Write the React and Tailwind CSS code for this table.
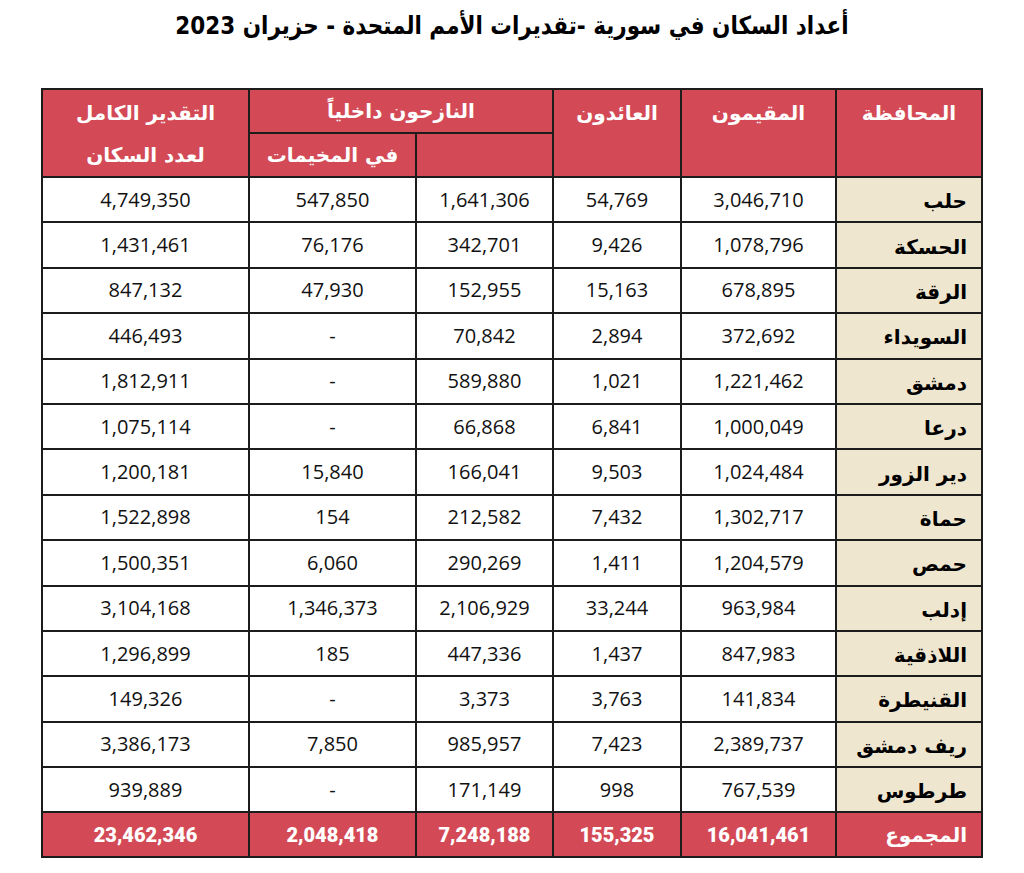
// Syria population table — UN estimates, June 2023

const ROWS = [
  ['حلب', '3,046,710', '54,769', '1,641,306', '547,850', '4,749,350'],
  ['الحسكة', '1,078,796', '9,426', '342,701', '76,176', '1,431,461'],
  ['الرقة', '678,895', '15,163', '152,955', '47,930', '847,132'],
  ['السويداء', '372,692', '2,894', '70,842', '-', '446,493'],
  ['دمشق', '1,221,462', '1,021', '589,880', '-', '1,812,911'],
  ['درعا', '1,000,049', '6,841', '66,868', '-', '1,075,114'],
  ['دير الزور', '1,024,484', '9,503', '166,041', '15,840', '1,200,181'],
  ['حماة', '1,302,717', '7,432', '212,582', '154', '1,522,898'],
  ['حمص', '1,204,579', '1,411', '290,269', '6,060', '1,500,351'],
  ['إدلب', '963,984', '33,244', '2,106,929', '1,346,373', '3,104,168'],
  ['اللاذقية', '847,983', '1,437', '447,336', '185', '1,296,899'],
  ['القنيطرة', '141,834', '3,763', '3,373', '-', '149,326'],
  ['ريف دمشق', '2,389,737', '7,423', '985,957', '7,850', '3,386,173'],
  ['طرطوس', '767,539', '998', '171,149', '-', '939,889'],
];

const TOTAL = ['المجموع', '16,041,461', '155,325', '7,248,188', '2,048,418', '23,462,346'];

const AR = "font-['DejaVu_Sans',sans-serif]";
const NUM = "font-['Open_Sans',sans-serif]";
const CELL = 'border-2 border-[#1c1c1c]';

export default function App() {
  return (
    <div className="min-h-screen bg-white pt-[9px]">
      <h1 dir="rtl" className={`${AR} text-center text-[25px] font-bold text-black leading-[34px] scale-x-[0.86]`}>
        أعداد السكان في سورية -تقديرات الأمم المتحدة - حزيران 2023
      </h1>

      <table dir="rtl" className="mx-auto mt-[45px] w-[940px] table-fixed border-collapse">
        <colgroup>
          <col className="w-[146px]" />
          <col className="w-[155px]" />
          <col className="w-[128px]" />
          <col className="w-[137px]" />
          <col className="w-[167px]" />
          <col className="w-[207px]" />
        </colgroup>
        <thead className={`${AR} text-white font-bold text-[20px] bg-[#d34a56]`}>
          <tr className="h-[43px]">
            <th rowSpan={2} className={`${CELL} align-top pt-[8px] font-bold`}>المحافظة</th>
            <th rowSpan={2} className={`${CELL} align-top pt-[8px] font-bold`}>المقيمون</th>
            <th rowSpan={2} className={`${CELL} align-top pt-[8px] font-bold`}>العائدون</th>
            <th colSpan={2} className={`${CELL} font-bold`}>النازحون داخلياً</th>
            <th rowSpan={2} className={`${CELL} align-top pt-[2px] font-bold leading-[42px]`}>
              التقدير الكامل
              <br />
              لعدد السكان
            </th>
          </tr>
          <tr className="h-[43px]">
            <th className={CELL}></th>
            <th className={`${CELL} font-bold`}>في المخيمات</th>
          </tr>
        </thead>
        <tbody>
          {ROWS.map((r) => (
            <tr key={r[0]} className="h-[45.4px]">
              <td className={`${CELL} ${AR} bg-[#efe6cf] text-right pr-[14px] pt-[3px] text-[20px] font-bold text-black`}>
                {r[0]}
              </td>
              {r.slice(1).map((v, i) => (
                <td key={i} className={`${CELL} ${NUM} text-center text-[20px] text-[#111]`}>
                  {v}
                </td>
              ))}
            </tr>
          ))}
          <tr className="h-[45px] bg-[#d34a56] text-white">
            <td className={`${CELL} ${AR} text-right pr-[14px] text-[20px] font-bold`}>{TOTAL[0]}</td>
            {TOTAL.slice(1).map((v, i) => (
              <td key={i} className={`${CELL} font-['Roboto',sans-serif] text-center text-[20px] font-black`}>
                {v}
              </td>
            ))}
          </tr>
        </tbody>
      </table>
    </div>
  );
}
